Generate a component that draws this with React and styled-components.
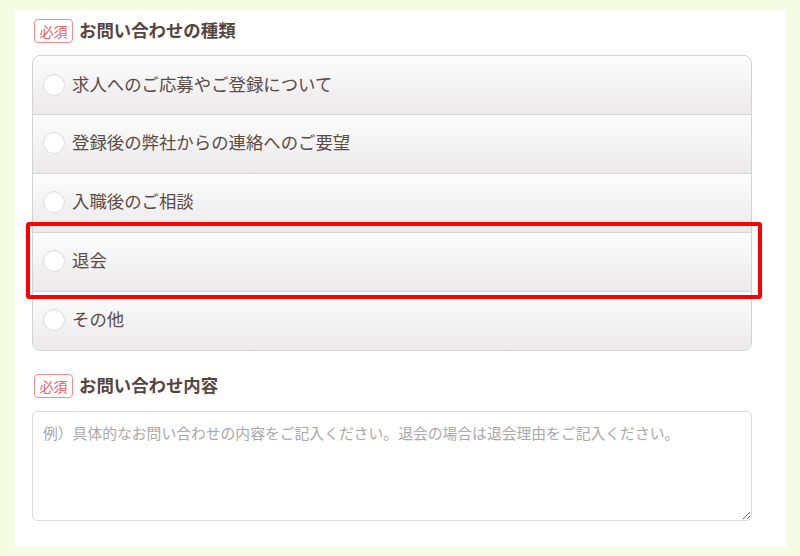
import React from "react";
import styled, { createGlobalStyle } from "styled-components";

const GlobalStyle = createGlobalStyle`
  html, body {
    margin: 0;
    padding: 0;
    background: #f4fde4;
  }
  body {
    font-family: "Noto Sans CJK JP", "Noto Sans", sans-serif;
  }
`;

const Page = styled.div`
  padding: 10px 14px 10px 15px;
`;

const Panel = styled.div`
  width: 771px;
  box-sizing: border-box;
  background: #fff;
  padding: 9px 17px 26px;
`;

const Section = styled.section`
  width: 720px;
  margin-top: ${(p) => p.gap || 0}px;
`;

const Heading = styled.div`
  display: flex;
  align-items: center;
  gap: 6px;
  height: 24px;
  padding-left: 2px;
  margin-bottom: ${(p) => p.space}px;
`;

const Badge = styled.span`
  display: inline-flex;
  align-items: center;
  justify-content: center;
  box-sizing: border-box;
  width: 39px;
  height: 24px;
  padding-bottom: 1px;
  border: 1px solid #f38c8c;
  border-radius: 4px;
  color: #f05c5c;
  font-size: 14px;
  line-height: 1;
`;

const Title = styled.h2`
  margin: 0;
  padding-bottom: 3px;
  font-size: 17.4px;
  font-weight: 700;
  color: #554540;
  line-height: 1;
`;

const Group = styled.div`
  border: 1px solid #d2d2d2;
  border-radius: 8px;
`;

const Row = styled.label`
  position: relative;
  display: flex;
  align-items: center;
  gap: 7px;
  height: ${(p) => (p.first ? 58 : 59)}px;
  box-sizing: border-box;
  padding: 0 0 ${(p) => (p.first ? 4 : 6)}px 10px;
  background: linear-gradient(#fdfdfd, #ebe9e9);
  border-top: ${(p) => (p.first ? "none" : "1px solid #d4d4d4")};
  border-radius: ${(p) =>
    p.first ? "8px 8px 0 0" : p.last ? "0 0 8px 8px" : "0"};
  color: #5c4b45;
  font-size: 17.4px;
  cursor: pointer;
`;

const Radio = styled.span`
  flex: none;
  width: 22px;
  height: 22px;
  margin-top: 4px;
  box-sizing: border-box;
  border-radius: 50%;
  background: #fff;
  border: 1px solid #dedede;
  box-shadow: inset 0 1px 2px rgba(0, 0, 0, 0.04);
`;

const Highlight = styled.span`
  position: absolute;
  z-index: 2;
  top: -11px;
  bottom: -8px;
  left: -7px;
  right: -11px;
  border: 4px solid #ff0000;
  border-radius: 3px;
  pointer-events: none;
`;

const TextArea = styled.textarea`
  display: block;
  width: 720px;
  height: 110px;
  box-sizing: border-box;
  padding: 9px 10px;
  border: 1px solid #dcdcdc;
  border-radius: 5px;
  font-family: "Noto Sans CJK JP", "Noto Sans", sans-serif;
  font-size: 14.8px;
  line-height: 1.6;
  color: #555;
  resize: both;
  outline: none;
  &::placeholder {
    color: #aaa8a8;
  }
`;

const options = [
  "求人へのご応募やご登録について",
  "登録後の弊社からの連絡へのご要望",
  "入職後のご相談",
  "退会",
  "その他",
];

export default function App() {
  return (
    <Page>
      <GlobalStyle />
      <Panel>
        <Section>
          <Heading space={12}>
            <Badge>必須</Badge>
            <Title>お問い合わせの種類</Title>
          </Heading>
          <Group>
            {options.map((o, i) => (
              <Row key={o} first={i === 0} last={i === options.length - 1}>
                <Radio />
                {o}
                {o === "退会" && <Highlight />}
              </Row>
            ))}
          </Group>
        </Section>
        <Section gap={23}>
          <Heading space={13}>
            <Badge>必須</Badge>
            <Title>お問い合わせ内容</Title>
          </Heading>
          <TextArea placeholder="例）具体的なお問い合わせの内容をご記入ください。退会の場合は退会理由をご記入ください。" />
        </Section>
      </Panel>
    </Page>
  );
}
